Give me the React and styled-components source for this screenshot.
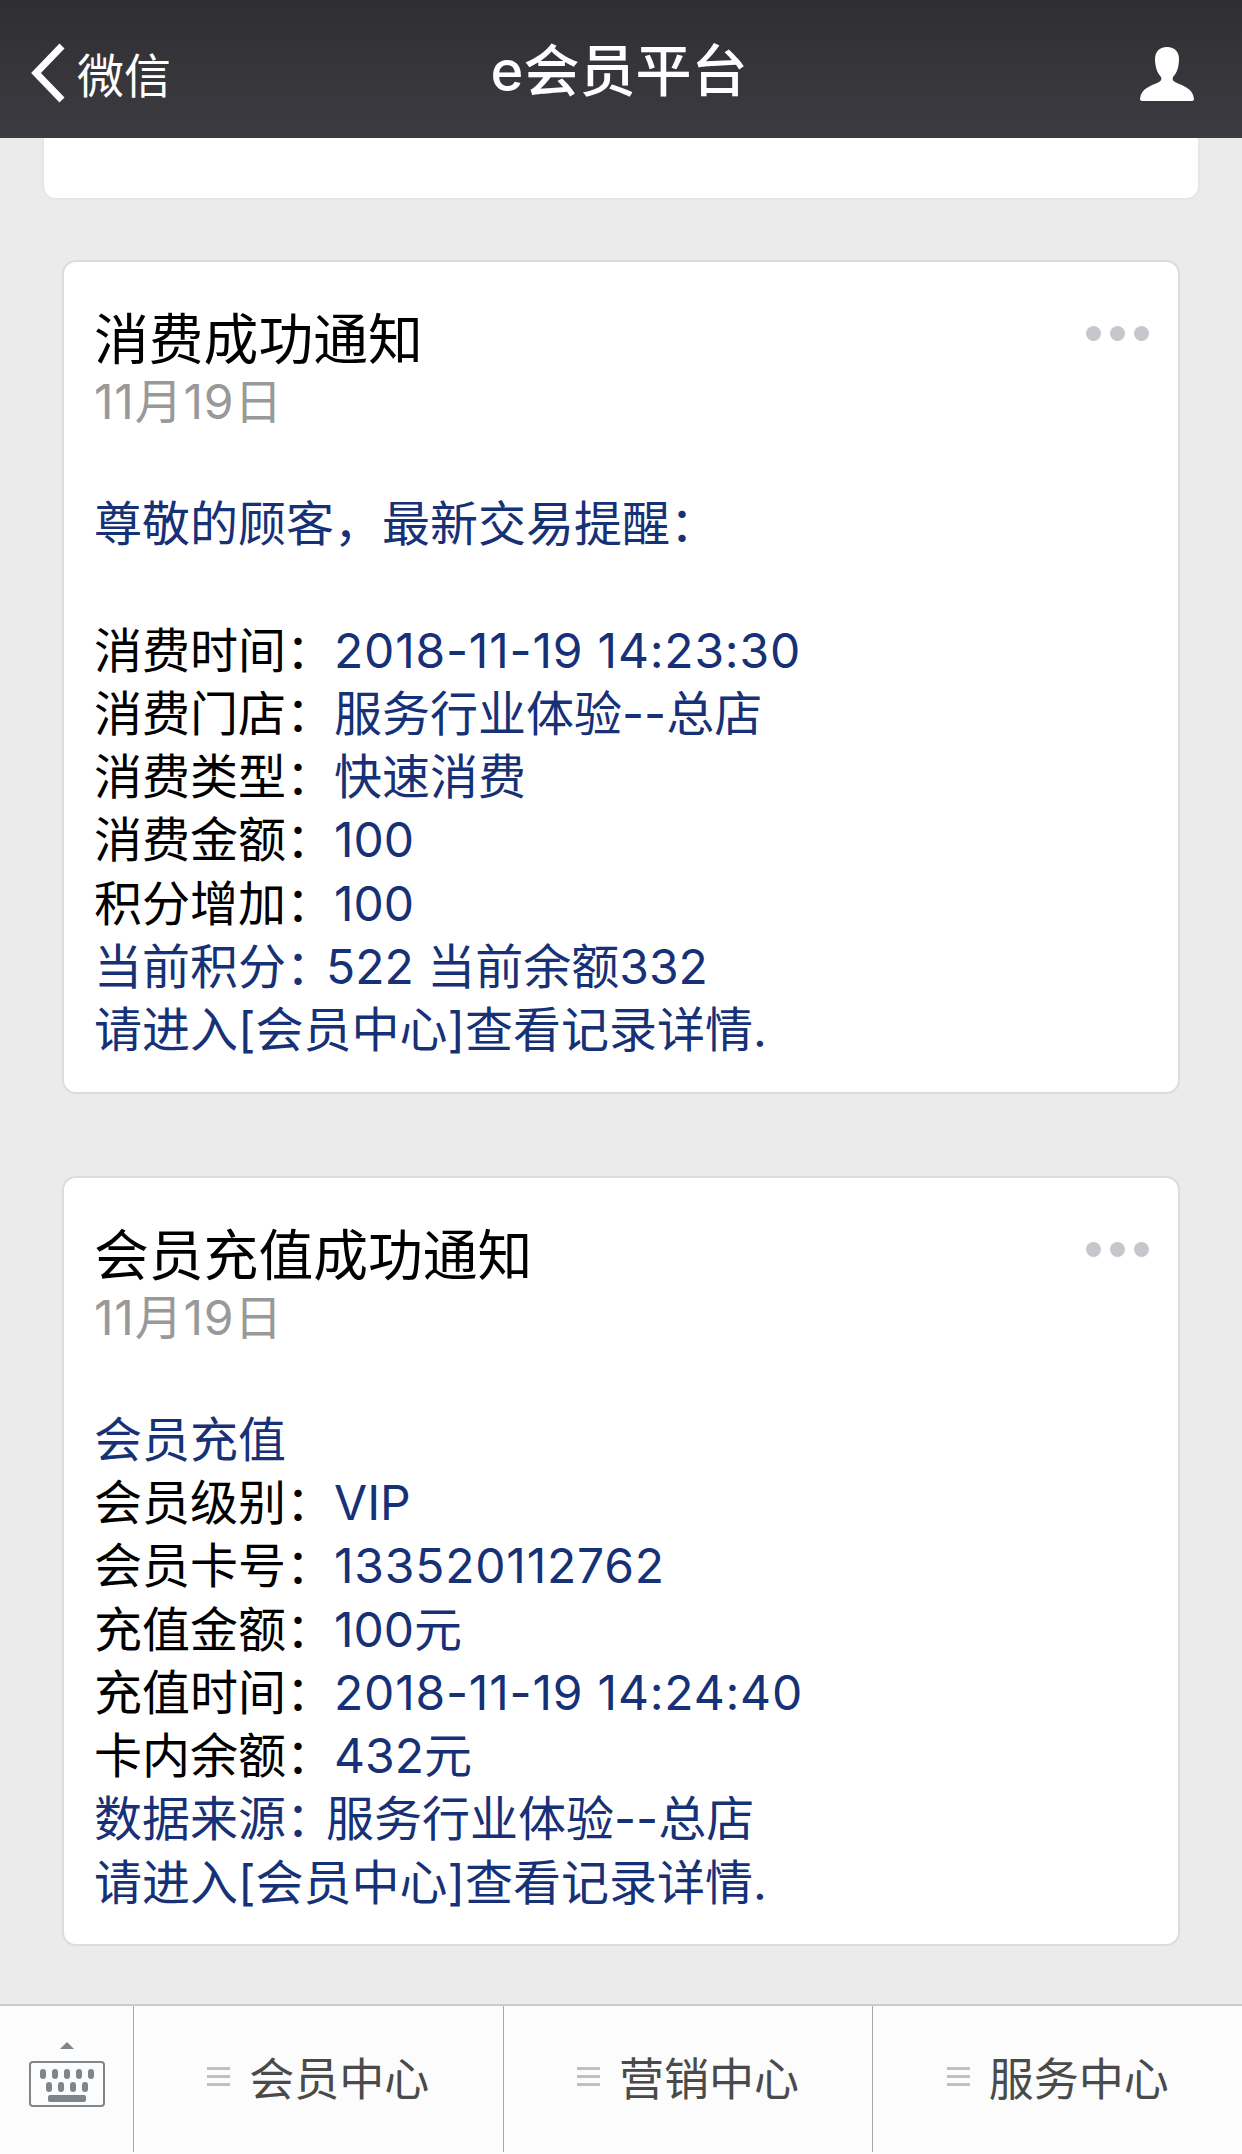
import React from "react";
import styled, { createGlobalStyle } from "styled-components";

const GlobalStyle = createGlobalStyle`
  html, body {
    margin: 0;
    padding: 0;
    background: #ebebeb;
  }
  body {
    font-family: Inter, "Noto Sans CJK SC", sans-serif;
  }
`;

const Page = styled.div`
  width: 1242px;
  height: 2154px;
  display: flex;
  flex-direction: column;
  overflow: hidden;
  background: #ebebeb;
`;

const NavBar = styled.header`
  height: 138px;
  flex: none;
  display: grid;
  grid-template-columns: 1fr auto 1fr;
  align-items: center;
  padding: 0 48px 0 30px;
  background: linear-gradient(#2f2f33, #3b3b41);
  color: #fff;
`;

const BackLink = styled.div`
  display: flex;
  align-items: center;
  gap: 11px;
  font-size: 47px;
  padding-top: 7px;
`;

const NavTitle = styled.div`
  font-size: 56px;
  font-weight: 500;
  line-height: 62px;
  margin-top: 3px;
  padding-left: 14px;
`;

const NavUser = styled.div`
  display: flex;
  justify-content: flex-end;
  padding-top: 9px;
`;

const Feed = styled.main`
  flex: 1;
  display: flex;
  flex-direction: column;
  gap: 82px;
  padding: 0 62px;
  min-height: 0;
`;

const PreviousCard = styled.div`
  height: 60px;
  margin: 0 -20px -22px;
  background: #fff;
  border: 2px solid #e6e6e6;
  border-top: none;
  border-radius: 0 0 14px 14px;
`;

const Card = styled.section`
  padding: 46px 29px 30px 30px;
  background: #fff;
  border: 2px solid #dcdcdc;
  border-radius: 14px;
`;

const CardHead = styled.div`
  display: flex;
  justify-content: space-between;
  align-items: flex-start;
`;

const CardTitle = styled.h2`
  margin: 0;
  font-size: 54.8px;
  font-weight: 400;
  line-height: 62px;
  color: #000;
`;

const Dots = styled.div`
  display: flex;
  gap: 9px;
  margin-top: 18px;
`;

const Dot = styled.span`
  width: 15px;
  height: 15px;
  border-radius: 50%;
  background: #c6c6cc;
`;

const CardDate = styled.div`
  font-size: 48px;
  line-height: 63px;
  letter-spacing: 0.8px;
  color: #999;
  margin-bottom: 59px;
`;

const Line = styled.div`
  font-size: 48px;
  line-height: 63.3px;
  white-space: nowrap;
  color: ${(p) => (p.$blue ? "#173177" : "#000")};
  margin-bottom: ${(p) => (p.$gap ? "63.3px" : "0")};
`;

const Value = styled.span`
  color: #173177;
  letter-spacing: ${(p) => (p.$numeric ? "0.8px" : "0")};
`;

const TightColon = styled.span`
  margin-right: -8px;
`;

const TabBar = styled.footer`
  height: 150px;
  flex: none;
  display: grid;
  grid-template-columns: 133px 1fr 1fr 1fr;
  background: #fcfcfc;
  border-top: 2px solid #cbcbcb;
  box-sizing: border-box;
`;

const KeyboardButton = styled.div`
  display: flex;
  justify-content: center;
  padding-top: 35px;
`;

const TabItem = styled.div`
  display: flex;
  align-items: center;
  justify-content: center;
  gap: 19px;
  height: 146px;
  box-sizing: border-box;
  padding-bottom: 6px;
  font-size: 45px;
  color: #4a4a4a;
  border-left: 1px solid #a8a8a8;
`;

const TabIcon = styled.span`
  display: flex;
  flex-direction: column;
  gap: 5px;
  width: 23px;
  span {
    height: 3px;
    background: #c0c0c0;
  }
`;

function BackIcon() {
  return (
    <svg width="36" height="60" viewBox="0 0 36 60">
      <path d="M32 3 L6 30 L32 57" fill="none" stroke="#fff" strokeWidth="7" />
    </svg>
  );
}

function UserIcon() {
  return (
    <svg width="54" height="54" viewBox="0 0 54 54">
      <path
        fill="#fff"
        d="M27 0c-8 0-12 5-12 12 0 7 2 14 6 18 1 2 0 4-2 5C11 39 1 41 0 52c0 1 1 2 2 2h50c1 0 2-1 2-2-1-11-11-13-19-17-2-1-3-3-2-5 4-4 6-11 6-18 0-7-4-12-12-12z"
      />
    </svg>
  );
}

function KeyboardIcon() {
  const top = [8, 20, 32, 44, 56];
  const middle = [14, 26, 38, 50];
  return (
    <svg width="76" height="66" viewBox="0 0 76 66">
      <path d="M31 8 L38 1 L45 8 Z" fill="#7e858b" />
      <rect x="1" y="21" width="74" height="44" rx="3" fill="none" stroke="#7e858b" strokeWidth="2" />
      {top.map((x) => (
        <rect key={x} x={x + 3} y="28" width="6" height="10" rx="3" fill="#7e858b" />
      ))}
      {middle.map((x) => (
        <rect key={x} x={x + 3} y="41" width="6" height="10" rx="3" fill="#7e858b" />
      ))}
      <rect x="19" y="54" width="38" height="7" rx="2" fill="#7e858b" />
    </svg>
  );
}

const NOTICES = [
  {
    title: "消费成功通知",
    lines: [
      { text: "尊敬的顾客，最新交易提醒：", blue: true, gap: true },
      { label: "消费时间：", value: "2018-11-19 14:23:30", numeric: true },
      { label: "消费门店：", value: "服务行业体验--总店" },
      { label: "消费类型：", value: "快速消费" },
      { label: "消费金额：", value: "100" },
      { label: "积分增加：", value: "100" },
      { tight: "当前积分：", text: "522 当前余额332", blue: true },
      { text: "请进入[会员中心]查看记录详情.", blue: true },
    ],
  },
  {
    title: "会员充值成功通知",
    lines: [
      { text: "会员充值", blue: true },
      { label: "会员级别：", value: "VIP" },
      { label: "会员卡号：", value: "133520112762", numeric: true },
      { label: "充值金额：", value: "100元" },
      { label: "充值时间：", value: "2018-11-19 14:24:40", numeric: true },
      { label: "卡内余额：", value: "432元" },
      { tight: "数据来源：", text: "服务行业体验--总店", blue: true },
      { text: "请进入[会员中心]查看记录详情.", blue: true },
    ],
  },
];

const TABS = ["会员中心", "营销中心", "服务中心"];

export default function App() {
  return (
    <Page>
      <GlobalStyle />
      <NavBar>
        <BackLink>
          <BackIcon />
          微信
        </BackLink>
        <NavTitle>e会员平台</NavTitle>
        <NavUser>
          <UserIcon />
        </NavUser>
      </NavBar>
      <Feed>
        <PreviousCard />
        {NOTICES.map((notice) => (
          <Card key={notice.title}>
            <CardHead>
              <CardTitle>{notice.title}</CardTitle>
              <Dots>
                <Dot />
                <Dot />
                <Dot />
              </Dots>
            </CardHead>
            <CardDate>11月19日</CardDate>
            {notice.lines.map((line, index) => (
              <Line key={index} $blue={line.blue} $gap={line.gap}>
                {line.label}
                {line.value && <Value $numeric={line.numeric}>{line.value}</Value>}
                {line.tight && <TightColon>{line.tight}</TightColon>}
                {line.text}
              </Line>
            ))}
          </Card>
        ))}
      </Feed>
      <TabBar>
        <KeyboardButton>
          <KeyboardIcon />
        </KeyboardButton>
        {TABS.map((tab) => (
          <TabItem key={tab}>
            <TabIcon>
              <span />
              <span />
              <span />
            </TabIcon>
            {tab}
          </TabItem>
        ))}
      </TabBar>
    </Page>
  );
}
